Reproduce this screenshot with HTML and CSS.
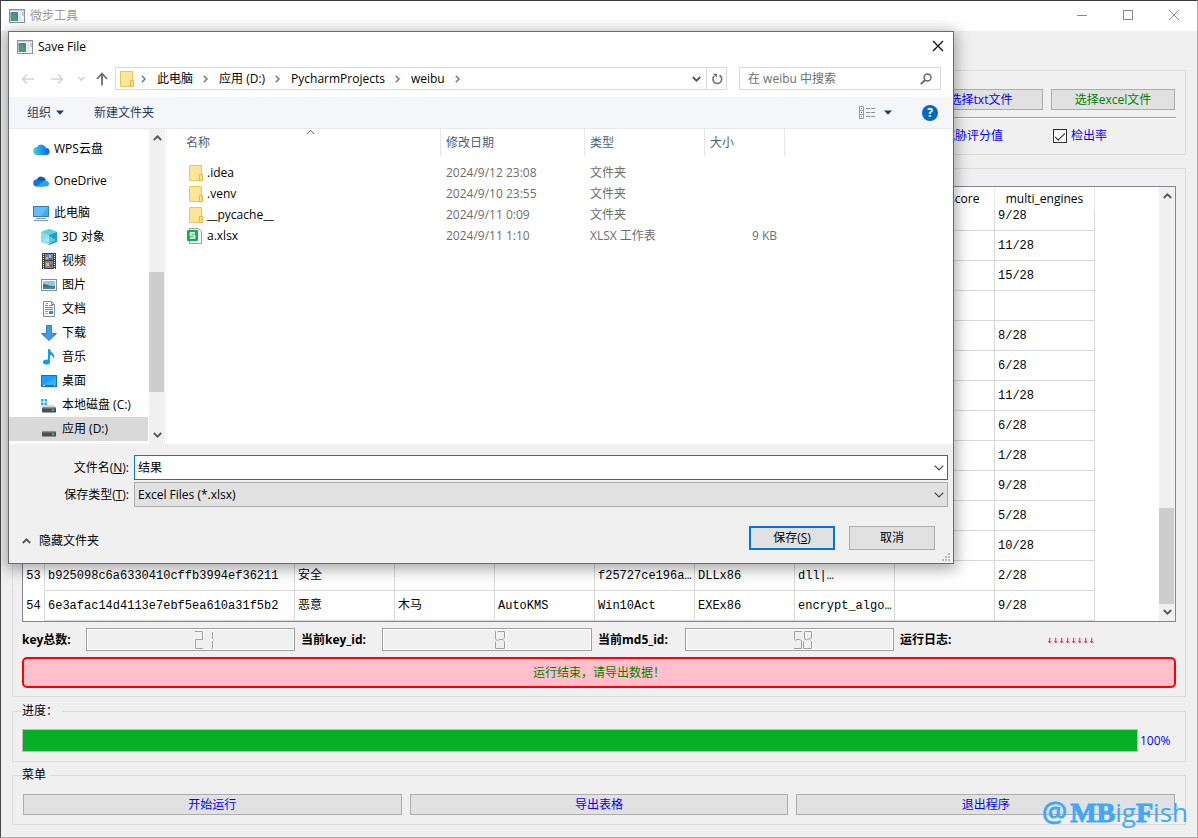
FILE: index.html
```
<!DOCTYPE html>
<html lang="zh-CN">
<head>
<meta charset="utf-8">
<title>微步工具</title>
<link rel="stylesheet" href="styles.css">
</head>
<body>
<svg class="defs" aria-hidden="true">
  <symbol id="app" viewBox="0 0 16 14"><rect x=".5" y=".5" width="15" height="13" fill="#f4f4f6" stroke="#8d9299"/><path d="M1 1.5h14" stroke="#c9cdd2"/><rect x="1.500" y="3" width="7.500" height="9" fill="#4d7fa0"/><path d="M2 12V6l3-2 3 4v4z" fill="#4f9a7c"/><rect x="10" y="3" width="2" height="9" fill="#dfe5ee"/><rect x="13" y="3" width="2" height="4" fill="#b9cbe4"/></symbol>
  <symbol id="folder" viewBox="0 0 14 16"><path d="M.5.5h12v15H.5z" fill="#ffe599" stroke="#edc84e"/><path d="M10.500 15.500v-6h3v6z" fill="#ffe08a" stroke="#e6b93c"/></symbol>
  <symbol id="up" viewBox="0 0 9 6"><path d="M.8 5 4.500 1.300 8.200 5" fill="none" stroke="currentColor" stroke-width="1.800"/></symbol>
  <symbol id="down" viewBox="0 0 9 6"><path d="M.8 1 4.500 4.700 8.200 1" fill="none" stroke="currentColor" stroke-width="1.800"/></symbol>
  <symbol id="thin-down" viewBox="0 0 10 6"><path d="M.7.7 5 5 9.300.7" fill="none" stroke="currentColor" stroke-width="1.200"/></symbol>
  <symbol id="right" viewBox="0 0 5 8"><path d="M.8.8 4 4 .8 7.200" fill="none" stroke="#777" stroke-width="1.500"/></symbol>
  <symbol id="caret" viewBox="0 0 8 5"><path d="M0 .5h8L4 4.800z" fill="#1f3b66"/></symbol>
  <symbol id="drive" viewBox="0 0 16 16"><path d="M3 8h10l2 3H1z" fill="#d5d8da"/><rect x="1" y="10.500" width="14" height="5" rx=".5" fill="#4b4f52"/><path d="M1.500 11h13" stroke="#8b8f92"/><rect x="11" y="12.500" width="2" height="1.500" fill="#3fe04c"/></symbol>
</svg>

<div class="window">
  <header class="titlebar">
    <svg class="app-icon"><use href="#app"/></svg>
    <h1 class="title">微步工具</h1>
    <div class="window-buttons">
      <button class="win-btn" aria-label="最小化"><svg viewBox="0 0 12 12"><path d="M1 5.500h10" stroke="#8a8a8a"/></svg></button>
      <button class="win-btn" aria-label="最大化"><svg viewBox="0 0 12 12"><rect x="1.500" y=".5" width="9" height="9" fill="none" stroke="#8a8a8a"/></svg></button>
      <button class="win-btn" aria-label="关闭"><svg viewBox="0 0 12 12"><path d="m1 0 10 10M11 0 1 10" stroke="#8a8a8a"/></svg></button>
    </div>
  </header>

  <main class="main">
    <fieldset class="group group-source">
      <div class="source-buttons">
        <button class="btn btn-blue source-btn">选择txt文件</button>
        <button class="btn btn-green source-btn">选择excel文件</button>
      </div>
      <hr class="rule">
      <div class="checks">
        <label class="check"><input type="checkbox" checked>威胁评分值</label>
        <label class="check check-last"><input type="checkbox" checked>检出率</label>
      </div>
    </fieldset>

    <fieldset class="group group-result">
      <div class="grid-view">
        <table class="results">
          <colgroup><col class="col-no"><col class="col-md5"><col><col><col><col><col><col><col><col></colgroup>
          <thead><tr><th></th><th></th><th></th><th></th><th></th><th></th><th></th><th></th><th>threat_score</th><th>multi_engines</th></tr></thead>
          <tbody>
            <tr class="cut"><th>41</th><td></td><td></td><td></td><td></td><td></td><td></td><td></td><td></td><td>9/28</td></tr>
            <tr><th>42</th><td></td><td></td><td></td><td></td><td></td><td></td><td></td><td></td><td>11/28</td></tr>
            <tr><th>43</th><td></td><td></td><td></td><td></td><td></td><td></td><td></td><td></td><td>15/28</td></tr>
            <tr><th>44</th><td></td><td></td><td></td><td></td><td></td><td></td><td></td><td></td><td></td></tr>
            <tr><th>45</th><td></td><td></td><td></td><td></td><td></td><td></td><td></td><td></td><td>8/28</td></tr>
            <tr><th>46</th><td></td><td></td><td></td><td></td><td></td><td></td><td></td><td></td><td>6/28</td></tr>
            <tr><th>47</th><td></td><td></td><td></td><td></td><td></td><td></td><td></td><td></td><td>11/28</td></tr>
            <tr><th>48</th><td></td><td></td><td></td><td></td><td></td><td></td><td></td><td></td><td>6/28</td></tr>
            <tr><th>49</th><td></td><td></td><td></td><td></td><td></td><td></td><td></td><td></td><td>1/28</td></tr>
            <tr><th>50</th><td></td><td></td><td></td><td></td><td></td><td></td><td></td><td></td><td>9/28</td></tr>
            <tr><th>51</th><td></td><td></td><td></td><td></td><td></td><td></td><td></td><td></td><td>5/28</td></tr>
            <tr><th>52</th><td></td><td></td><td></td><td></td><td></td><td></td><td></td><td></td><td>10/28</td></tr>
            <tr><th>53</th><td>b925098c6a6330410cffb3994ef36211</td><td>安全</td><td></td><td></td><td>f25727ce196a…</td><td>DLLx86</td><td>dll|…</td><td></td><td>2/28</td></tr>
            <tr><th>54</th><td>6e3afac14d4113e7ebf5ea610a31f5b2</td><td>恶意</td><td>木马</td><td>AutoKMS</td><td>Win10Act</td><td>EXEx86</td><td>encrypt_algo…</td><td></td><td>9/28</td></tr>
          </tbody>
        </table>
        <div class="scrollbar">
          <svg class="arrow"><use href="#up"/></svg>
          <div class="track"><div class="thumb thumb-results"></div></div>
          <svg class="arrow"><use href="#down"/></svg>
        </div>
      </div>

      <div class="status">
        <span class="status-label">key总数:</span>
        <div class="lcd"><svg class="digits" viewBox="0 0 20 20"><path d="M1 1h8v8H1v10h9M19 1v8M19 11v8" fill="none" stroke="#fff"/><path d="M1 1.500h7.500v8H1.500M1.500 9.500v9H9M18.500 2v7M18.500 11v8" fill="none" stroke="#a0a0a0"/></svg></div>
        <span class="status-label">当前key_id:</span>
        <div class="lcd"><svg class="digits" viewBox="0 0 20 20"><path d="M4 1h12v18H4" fill="none" stroke="#fff"/><path d="M5.500 1v8l2 1.500 2-1h3l2-1.500V1.500h-7M5.500 18.500v-7M5.500 18.500h9v-7l-1-1" fill="none" stroke="#a0a0a0"/></svg></div>
        <span class="status-label">当前md5_id:</span>
        <div class="lcd"><svg class="digits" viewBox="0 0 20 20"><path d="M1 1h18v18H1" fill="none" stroke="#fff"/><path d="M9 1.500H1.500v8l1 1 1-1h3l2 1v8H1M11.500 1v8l2 1 1-1h3l1-1V1.500h-6M10.500 11.500v7h8v-7l-1-1" fill="none" stroke="#a0a0a0"/></svg></div>
        <span class="status-label">运行日志:</span>
        <span class="log-arrows">↓↓↓↓↓↓↓↓</span>
      </div>
      <div class="message">运行结束，请导出数据！</div>
    </fieldset>

    <fieldset class="group group-progress">
      <legend>进度：</legend>
      <div class="progress-row">
        <progress class="progress" value="100" max="100" aria-label="进度"></progress>
        <span class="percent">100%</span>
      </div>
    </fieldset>

    <fieldset class="group group-menu">
      <legend>菜单</legend>
      <div class="menu">
        <button class="btn btn-blue">开始运行</button>
        <button class="btn btn-blue">导出表格</button>
        <button class="btn btn-blue">退出程序</button>
      </div>
    </fieldset>
  </main>

  <section class="dialog" role="dialog" aria-label="Save File">
    <header class="dialog-title">
      <svg class="app-icon"><use href="#app"/></svg>
      <h2 class="title">Save File</h2>
      <button class="close" aria-label="关闭"><svg viewBox="0 0 12 12"><path d="m1 0 10 10M11 0 1 10" stroke="#000" stroke-width="1.200"/></svg></button>
    </header>

    <nav class="nav">
      <button class="nav-btn" aria-label="后退"><svg viewBox="0 0 14 14"><path d="M13 7H2M6 2.500 1.500 7 6 11.500" fill="none" stroke="#d3d3d3" stroke-width="1.600"/></svg></button>
      <button class="nav-btn" aria-label="前进"><svg viewBox="0 0 14 14"><path d="M1 7h11M8 2.500 12.500 7 8 11.500" fill="none" stroke="#d3d3d3" stroke-width="1.600"/></svg></button>
      <button class="nav-btn nav-recent" aria-label="最近位置"><svg viewBox="0 0 9 6"><path d="M1.500 1 4.500 4l3-3" fill="none" stroke="#d3d3d3" stroke-width="1.600"/></svg></button>
      <button class="nav-btn" aria-label="上移"><svg viewBox="0 0 14 14"><path d="M7 13.500V2M2 7l5-5.500L12 7" fill="none" stroke="#6e6e6e" stroke-width="1.800"/></svg></button>
      <div class="address">
        <svg class="folder"><use href="#folder"/></svg>
        <svg class="sep"><use href="#right"/></svg><a class="crumb" href="#">此电脑</a>
        <svg class="sep"><use href="#right"/></svg><a class="crumb" href="#">应用 (D:)</a>
        <svg class="sep"><use href="#right"/></svg><a class="crumb" href="#">PycharmProjects</a>
        <svg class="sep"><use href="#right"/></svg><a class="crumb" href="#">weibu</a>
        <svg class="sep"><use href="#right"/></svg>
        <button class="addr-btn addr-drop" aria-label="历史"><svg class="chev"><use href="#down"/></svg></button>
        <button class="addr-btn addr-refresh" aria-label="刷新"><svg class="refresh" viewBox="0 0 12 12"><path d="M8.500 2.300A4.400 4.400 0 1 1 3.200 3" fill="none" stroke="#6e6e6e" stroke-width="1.600"/><path d="M2 .8h4v4z" fill="#6e6e6e"/></svg></button>
      </div>
      <div class="search">
        <input type="text" placeholder="在 weibu 中搜索" aria-label="搜索">
        <svg class="lens" viewBox="0 0 12 12"><circle cx="7.500" cy="4.500" r="3.500" fill="none" stroke="#666" stroke-width="1.400"/><path d="M5 7 .8 11.200" stroke="#666" stroke-width="1.800"/></svg>
      </div>
    </nav>

    <div class="toolbar">
      <button class="tool">组织<svg class="caret"><use href="#caret"/></svg></button>
      <button class="tool">新建文件夹</button>
      <button class="tool tool-view" aria-label="视图"><svg class="view" viewBox="0 0 17 13"><path d="M.5.5h4v12h-4zM.5 4.500h4M.5 8.500h4" fill="#fff" stroke="#999"/><path d="M2 2.500h1M2 10.500h1" stroke="#c44"/><path d="M2 6.500h1" stroke="#36a"/><path d="M7 2.500h4M12 2.500h4M7 6.500h4M12 6.500h4M7 10.500h4M12 10.500h4" stroke="#8a8f96"/></svg><svg class="caret"><use href="#caret"/></svg></button>
      <button class="help" aria-label="帮助">?</button>
    </div>

    <div class="browser">
      <ul class="tree">
        <li class="node gap"><svg viewBox="0 0 16 16"><defs><linearGradient id="wps" x1="0" x2="1"><stop offset="0" stop-color="#3fe0c8"/><stop offset=".45" stop-color="#1f9df5"/><stop offset="1" stop-color="#1759e8"/></linearGradient></defs><path d="M4.500 14a4 4 0 0 1-.5-8 5 5 0 0 1 9 1 3.500 3.500 0 0 1 0 7z" fill="url(#wps)"/></svg>WPS云盘</li>
        <li class="node gap"><svg viewBox="0 0 16 16"><path d="M4 6a5 5 0 0 1 9 1L8 11 2 8z" fill="#0b5bb5"/><path d="M3.500 13.500A3.500 3.500 0 0 1 4 6.500c2 0 4 2 8 4l-2 3z" fill="#1377d4"/><path d="M4 13.500 9 9c3-3 7-1 7 1.500a3 3 0 0 1-3 3z" fill="#2ba3ee"/></svg>OneDrive</li>
        <li class="node"><svg viewBox="0 0 16 16"><rect x=".5" y="1.500" width="15" height="10" fill="#62bdff" stroke="#3a7ca8"/><path d="m8 11 7-9v9z" fill="#45aaf6"/><path d="M3 13.500h10M1 15.500h14" stroke="#8298a8"/></svg>此电脑</li>
        <li class="node sub"><svg viewBox="0 0 16 16"><path d="m0 3 8-3v16l-8-3z" fill="#87dfe8"/><path d="m8 0 8 3v10l-8 3z" fill="#1a9fc6"/><path d="m0 3 8-3 8 3-8 3z" fill="#5fd0e0"/><path d="m1 11 7-4 7 4-7 4z" fill="#b9eef2" opacity=".5"/></svg>3D 对象</li>
        <li class="node sub"><svg viewBox="0 0 16 16"><rect x="1" width="14" height="16" fill="#3f3f3f"/><path d="M2.500 1v15M13.500 1v15" stroke="#fff" stroke-dasharray="1 1"/><path d="M4 1h8v6H4zM4 8h8v7H4z" fill="#5b87d8"/><path d="M5 4h2v2H5zm3-2h2v3H8zM5 10h3v3H5z" fill="#e8bf31"/><path d="M8 5h3v2H8zm1 6h2v3H9z" fill="#b94432"/></svg>视频</li>
        <li class="node sub"><svg viewBox="0 0 16 16"><rect x=".5" y="2.500" width="15" height="11" fill="#fff" stroke="#8c8c8c"/><rect x="2" y="4" width="12" height="8" fill="#8fc6ee"/><path d="M2 7c4 0 6 3 12 2v3H2z" fill="#35755f"/><path d="M2 10h12v2H2z" fill="#4a83b2"/></svg>图片</li>
        <li class="node sub"><svg viewBox="0 0 16 16"><path d="M2.500.5h8l3 3v12h-11z" fill="#fff" stroke="#7f8c98"/><path d="M10.500.5v3h3" fill="none" stroke="#7f8c98"/><path d="M4 4.500h3M5 2.500h2M8 4.500h4M4 6.500h8M4 8.500h8" stroke="#3d9be0"/><path d="M4 10.500h3M4 12.500h3" stroke="#8ea0b0"/><path d="M8 10h4v3H8z" fill="#3d88c0"/></svg>文档</li>
        <li class="node sub"><svg viewBox="0 0 16 16"><path d="M5.500.5h5v8h5L8 15.500.5 8.500h5z" fill="#3f9bea" stroke="#2b80cd"/></svg>下载</li>
        <li class="node sub"><svg viewBox="0 0 16 16"><ellipse cx="5.500" cy="13" rx="3.500" ry="2.600" fill="#0f9cf3"/><path d="M7 13V0h2c0 4 6 4 4 10-1-3-2-4-4-4v7z" fill="#0f9cf3"/></svg>音乐</li>
        <li class="node sub"><svg viewBox="0 0 16 16"><rect x=".5" y="2.500" width="15" height="11" fill="#1b9fff" stroke="#0b74c7"/><path d="M1 13 15 4v9z" fill="#38aeff"/><path d="M1 12.500h14" stroke="#0b74c7"/><path d="M2 12.500h2M13 12.500h1" stroke="#fff"/></svg>桌面</li>
        <li class="node sub"><svg viewBox="0 0 16 16"><use href="#drive" width="16" height="16"/><path d="M0 2h2.500v2.500H0zM3.500 2H6v2.500H3.500zM0 5.500h2.500V8H0zM3.500 5.500H6V8H3.500z" fill="#1ab4f0"/></svg>本地磁盘 (C:)</li>
        <li class="node sub selected"><svg><use href="#drive"/></svg>应用 (D:)</li>
      </ul>
      <div class="scrollbar scrollbar-tree">
        <svg class="arrow"><use href="#up"/></svg>
        <div class="track"><div class="thumb thumb-tree"></div></div>
        <svg class="arrow"><use href="#down"/></svg>
      </div>
      <div class="files">
        <svg class="sort" viewBox="0 0 9 6"><path d="M.8 5 4.500 1.300 8.200 5" fill="none" stroke="#555"/></svg>
        <table class="file-table">
          <colgroup><col class="f-name"><col class="f-date"><col class="f-type"><col class="f-size"></colgroup>
          <thead><tr><th>名称</th><th>修改日期</th><th>类型</th><th>大小</th></tr></thead>
          <tbody>
            <tr><td><span class="file"><svg class="folder"><use href="#folder"/></svg>.idea</span></td><td>2024/9/12 23:08</td><td>文件夹</td><td></td></tr>
            <tr><td><span class="file"><svg class="folder"><use href="#folder"/></svg>.venv</span></td><td>2024/9/10 23:55</td><td>文件夹</td><td></td></tr>
            <tr><td><span class="file"><svg class="folder"><use href="#folder"/></svg>__pycache__</span></td><td>2024/9/11 0:09</td><td>文件夹</td><td></td></tr>
            <tr><td><span class="file"><svg class="sheet" viewBox="0 0 15 16"><path d="M2.500.5h9l3 3v12h-12z" fill="#fff" stroke="#9aa0aa"/><rect y="2" width="11" height="11" rx="1" fill="#12b24b"/><path d="M8 5H3.500v2.500h4V10H3" fill="none" stroke="#fff" stroke-width="1.500"/></svg>a.xlsx</span></td><td>2024/9/11 1:10</td><td>XLSX 工作表</td><td class="size">9 KB</td></tr>
          </tbody>
        </table>
      </div>
    </div>

    <div class="form">
      <div class="field">
        <label for="fname">文件名(<u>N</u>):</label>
        <div class="combo combo-edit"><input id="fname" type="text" value="结果"><svg class="combo-arrow"><use href="#thin-down"/></svg></div>
      </div>
      <div class="field">
        <label for="ftype">保存类型(<u>T</u>):</label>
        <div class="combo"><select id="ftype"><option>Excel Files (*.xlsx)</option></select><svg class="combo-arrow"><use href="#thin-down"/></svg></div>
      </div>
      <div class="actions">
        <button class="hide"><svg class="chev"><use href="#up"/></svg>隐藏文件夹</button>
        <button class="btn action primary">保存(<u>S</u>)</button>
        <button class="btn action">取消</button>
      </div>
    </div>
    <svg class="grip" viewBox="0 0 8 8"><path d="M6 0h2v2H6zM3 3h2v2H3zM6 3h2v2H6zM0 6h2v2H0zM3 6h2v2H3zM6 6h2v2H6z" fill="#bdbdbd"/></svg>
  </section>

  <div class="watermark"><span class="wm-at">@</span><b>MB</b><span>ig</span><b>F</b><span>ish</span></div>
</div>
</body>
</html>
```

FILE: styles.css
```
* { box-sizing: border-box; }
body {
  margin: 0;
  font: 12px/16px "Open Sans", "Noto Sans CJK SC", sans-serif;
  color: #000;
  background: #f0f0f0;
}
button, input, select { font: inherit; color: inherit; margin: 0; padding: 0; border: 0; background: none; border-radius: 0; }
button, label { white-space: nowrap; }
svg { display: block; flex: none; overflow: visible; }
.defs { position: absolute; width: 0; height: 0; }

.window {
  position: relative;
  min-height: 100vh;
  background: #f0f0f0;
  border: 1px solid #aaa;
  border-top-color: #3c3a3c;
  border-left-color: #4a4848;
}
.titlebar { display: flex; align-items: center; height: 30px; padding-left: 8px; background: #fff; color: #999; }
.app-icon { width: 16px; height: 14px; }
.title { margin: 0 0 0 5px; font-size: 12px; font-weight: 400; }
.window-buttons { display: flex; margin-left: auto; }
.win-btn { display: grid; place-items: center; width: 46px; height: 28px; }
.win-btn svg { width: 12px; height: 12px; }

.main { padding: 39px 11px 11px; }
.group { margin: 0; min-width: 0; border: 1px solid #dcdcdc; padding: 0 9px; }
.btn { height: 21px; border: 1px solid #adadad; background: #e1e1e1; }
.btn-blue { color: #00f; }
.btn-green { color: #008000; }

.group-source { padding-top: 18px; padding-bottom: 10px; }
.source-buttons { display: flex; justify-content: flex-end; gap: 8px; padding-right: 1px; }
.source-btn { width: 124px; }
.rule { margin: 7px 0 9px; border: 0; border-top: 1px solid #a0a0a0; border-bottom: 1px solid #fff; }
.checks { display: flex; justify-content: flex-end; gap: 50px; color: #00f; }
.check { display: flex; align-items: center; gap: 4px; }
.check-last { width: 123px; }
.check input { appearance: none; width: 14px; height: 14px; border: 1px solid #333; background: #fff; display: grid; place-items: center; }
.check input::after { content: ""; width: 9px; height: 4px; border: solid #222; border-width: 0 0 1px 1px; transform: translateY(-1px) rotate(-45deg); }

.group-result { margin-top: 13px; padding-top: 17px; padding-bottom: 8px; }
.grid-view { display: flex; justify-content: space-between; border: 1px solid #828790; background: #fff; }
.results { table-layout: fixed; width: 1072px; border-spacing: 0; font: 12px/14px "Liberation Mono", "Noto Sans CJK SC", monospace; }
.results col { width: 100px; }
.results .col-no { width: 22px; }
.results .col-md5 { width: 250px; }
.results th, .results td { height: 30px; padding: 0 0 0 3px; border-right: 1px solid #d8d8d8; border-bottom: 1px solid #d8d8d8; text-align: left; white-space: nowrap; overflow: hidden; }
.results th { padding: 0; border-bottom-color: #fff; text-align: center; font: 12px/16px "Open Sans", "Noto Sans CJK SC", sans-serif; }
.results tbody th { font-family: "Liberation Mono", monospace; }
.results thead th { height: 23px; border-bottom: 0; border-right-color: #e8e8e8; }
.results .cut th, .results .cut td { height: 21px; padding-bottom: 8px; line-height: 12px; }
.scrollbar { display: flex; flex-direction: column; align-items: center; width: 16px; padding: 6px 0; background: #f0f0f0; color: #555; }
.arrow { width: 9px; height: 6px; }
.track { flex: 1; width: 100%; margin: 5px 0; display: flex; flex-direction: column; }
.thumb { background: #cdcdcd; width: 15px; }
.thumb-results { height: 96px; margin-top: auto; }
.scrollbar-tree { width: 16px; }
.thumb-tree { height: 120px; margin-top: 126px; }

.status { display: grid; grid-template-columns: 58px 209fr 75px 210fr 81px 209fr 54px 216fr; gap: 6px; align-items: center; margin-top: 6px; }
.status-label { font-weight: 700; white-space: nowrap; }
.lcd { display: grid; place-items: center; height: 23px; border: 1px solid #a0a0a0; outline: 1px solid #fff; outline-offset: -2px; }
.digits { width: 20px; height: 20px; margin-left: 26px; }
.log-arrows { padding-left: 5px; text-align: center; color: #ff1a75; font-family: "DejaVu Sans Mono", monospace; font-size: 10px; font-weight: 700; }
.message { margin-top: 6px; height: 31px; border: 2px solid #f00; border-radius: 5px; background: #ffc0cb; color: #008000; line-height: 27px; text-align: center; }

.group legend { padding: 0 4px 0 0; margin-left: 0; height: 16px; }
.group-progress { margin-top: 6px; padding-top: 10px; padding-bottom: 9px; }
.progress-row { display: flex; align-items: center; gap: 2px; }
.progress { appearance: none; flex: 1; height: 23px; border: 1px solid #bcbcbc; background: #e6e6e6; }
.progress::-webkit-progress-bar { background: #e6e6e6; }
.progress::-webkit-progress-value { background: #06b025; }
.percent { width: 36px; color: #00f; }
.group-menu { margin-top: 5px; padding-top: 11px; padding-bottom: 9px; }
.menu { display: grid; grid-template-columns: 1fr 1fr 1fr; gap: 8px; padding: 0 1px; }

/* Save dialog floats above the main window */
.dialog { position: absolute; left: 7px; top: 30px; width: 946px; border: 1px solid #6c6c6c; background: #fff; box-shadow: 0 3px 14px 2px rgba(0, 0, 0, .35); }
.dialog-title { display: flex; align-items: center; height: 30px; padding: 0 8px; }
.close { margin-left: auto; display: grid; place-items: center; width: 14px; height: 20px; }
.close svg { width: 12px; height: 12px; }
.nav { display: flex; align-items: center; height: 35px; padding: 0 12px; padding-bottom: 2px; }
.nav-btn { width: 14px; margin-right: 15px; }
.nav-btn svg { width: 14px; height: 14px; }
.nav-recent { width: 9px; margin-right: 8px; margin-left: -2px; }
.nav-recent svg { width: 9px; height: 6px; }
.nav-recent + .nav-btn { margin-right: 6px; margin-left: 1px; }
.address { flex: 1; display: flex; align-items: center; height: 23px; padding-left: 4px; border: 1px solid #d9d9d9; }
.folder { width: 14px; height: 16px; }
.sheet { width: 15px; height: 16px; margin-left: -2px; margin-right: 1px; }
.sep { width: 5px; height: 8px; margin: 0 11px 0 10px; }
.crumb { color: inherit; text-decoration: none; white-space: nowrap; }
.address .folder + .sep { margin-left: 7px; }
.addr-btn { display: grid; place-items: center; width: 20px; height: 21px; color: #6e6e6e; }
.addr-drop { margin-left: auto; }
.addr-refresh { border-left: 1px solid #d9d9d9; }
.chev { width: 9px; height: 6px; color: #555; }
.refresh { width: 12px; height: 12px; }
.search { display: flex; align-items: center; width: 202px; height: 23px; margin-left: 12px; padding: 0 8px; border: 1px solid #d9d9d9; }
.search input { flex: 1; min-width: 0; outline: 0; }
.search input::placeholder { color: #6d6d6d; opacity: 1; }
.lens { width: 12px; height: 12px; }

.toolbar { display: flex; align-items: center; height: 32px; padding: 0 15px 0 18px; border-bottom: 1px solid #e5e8ec; background: #f5f6f9; color: #1f3b66; }
.tool { display: flex; align-items: center; gap: 5px; margin-right: 30px; }
.caret { width: 8px; height: 5px; }
.tool-view { margin-left: auto; gap: 8px; }
.view { width: 17px; height: 13px; }
.help { width: 16px; height: 16px; border-radius: 50%; background: #0568c4; color: #fff; font-weight: 700; line-height: 16px; }

.browser { display: flex; height: 315px; }
.tree { list-style: none; width: 139px; margin: 0; padding: 8px 0 0; }
.node { display: flex; align-items: center; gap: 5px; height: 24px; padding-left: 24px; white-space: nowrap; }
.node svg { width: 16px; height: 16px; }
.node.gap { margin-bottom: 8px; }
.node.sub { padding-left: 32px; }
.node.selected { background: #d9d9d9; }
.scrollbar-tree { margin-left: 1px; }
.files { position: relative; flex: 1; border-left: 1px solid #f4f4f4; margin-left: 1px; }
.sort { position: absolute; left: 139px; top: 0; width: 9px; height: 6px; }
.file-table { table-layout: fixed; width: 618px; border-spacing: 0; color: #6d6d6d; }
.f-name { width: 274px; }
.f-date { width: 144px; }
.f-type { width: 120px; }
.f-size { width: 80px; }
.file-table th { height: 27px; padding: 0 5px; border-right: 1px solid #e5e5e5; text-align: left; font-weight: 400; color: #4c607a; }
.file-table th:first-child { padding-left: 19px; }
.file-table td { height: 21px; padding: 0 5px; white-space: nowrap; }
.file-table tbody::before { content: ""; display: block; height: 6px; }
.file-table td:first-child { padding-left: 22px; color: #000; }
.file-table .size { text-align: right; padding-right: 8px; }
.file { display: flex; align-items: center; gap: 4px; }

.form { padding: 11px 5px 13px 0; background: #f0f0f0; }
.field { display: flex; align-items: center; margin-bottom: 2px; }
.field label { width: 125px; padding-right: 5px; text-align: right; }
.combo { position: relative; flex: 1; display: flex; height: 25px; border: 1px solid #adadad; background: #e1e1e1; }
.combo-edit { border-color: #0078d7; background: #fff; }
.combo input, .combo select { appearance: none; flex: 1; min-width: 0; padding-left: 3px; outline: 0; }
.combo-arrow { position: absolute; right: 3px; top: 9px; width: 10px; height: 6px; color: #444; pointer-events: none; }
.actions { display: flex; align-items: center; gap: 14px; margin-top: 19px; padding: 0 13px; }
.hide { display: flex; align-items: center; gap: 8px; margin-right: auto; padding-top: 5px; }
.action { width: 86px; height: 24px; }
.primary { border: 2px solid #0078d7; }
.grip { position: absolute; right: 3px; bottom: 2px; width: 8px; height: 8px; }

/* Signature laid over the bottom-right corner */
.watermark { position: absolute; right: 9px; bottom: 8px; display: flex; align-items: baseline; color: #3fa9f8; font-size: 26px; line-height: 32px; pointer-events: none; }
.watermark b { font-family: "Liberation Serif", serif; font-size: 28px; -webkit-text-stroke: 1px #3fa9f8; }
.wm-at { margin-right: 3px; font-size: 28px; -webkit-text-stroke: 1px #3fa9f8; }
```
